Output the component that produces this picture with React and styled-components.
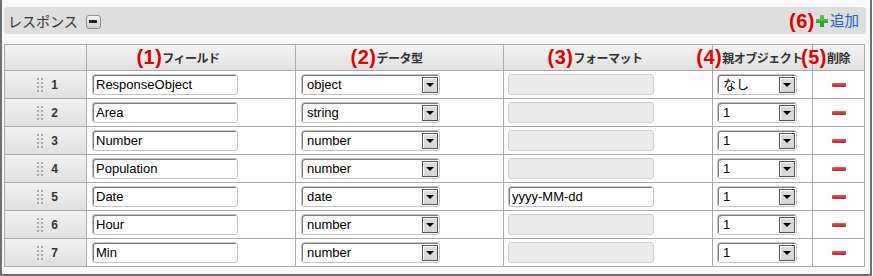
import React from 'react'
import styled, { createGlobalStyle } from 'styled-components'

const GlobalStyle = createGlobalStyle`
  body {
    margin: 0;
    background: #fff;
    font-family: "Liberation Sans", "Noto Sans CJK JP", sans-serif;
  }
`;

const Panel = styled.div`
  box-sizing: border-box;
  width: 872px;
  height: 276px;
  padding: 7px 4px 7px 2px;
  border: 2px solid #6f6f6f;
  border-top: none;
  background: #f8f8fb;
`;

const HeaderBar = styled.div`
  height: 27px;
  display: flex;
  align-items: center;
  padding: 0 7px 0 4px;
  background: #dedede;
  border-radius: 4px;
  margin-bottom: 10px;
`;

const Title = styled.span`
  font-family: "Noto Sans CJK JP", sans-serif;
  font-size: 14px;
  color: #333;
  line-height: 1;
`;

const CollapseButton = styled.button`
  box-sizing: border-box;
  width: 15px;
  height: 14px;
  margin: 2px 0 0 8px;
  padding: 0;
  border: 1px solid #8a8a8a;
  border-radius: 3px;
  background: linear-gradient(#f6f6f6, #cfcfcf);
  display: flex;
  align-items: center;
  justify-content: center;
  &::after {
    content: "";
    width: 8px;
    height: 3px;
    background: #222;
  }
`;

const AddLink = styled.a`
  position: relative;
  margin-left: auto;
  display: flex;
  align-items: center;
  gap: 1px;
  color: #1f5fc4;
  font-family: "Noto Sans CJK JP", sans-serif;
  font-size: 14.5px;
  text-decoration: none;
  line-height: 1;
`;

const Annotation = styled.span`
  position: absolute;
  right: 100%;
  top: 50%;
  transform: translateY(-50%);
  color: #e00000;
  font-family: "Liberation Sans", sans-serif;
  font-weight: bold;
  font-size: 20px;
  letter-spacing: 0.5px;
  white-space: nowrap;
  line-height: 1;
`;

const Grid = styled.table`
  width: 861px;
  table-layout: fixed;
  border-collapse: separate;
  border-spacing: 0;
  border-top: 1px solid #aaa;
  border-left: 1px solid #aaa;
  background: #fff;
`;

const HeadCell = styled.th`
  box-sizing: border-box;
  height: 26px;
  padding: 0;
  border-right: 1px solid #aaa;
  border-bottom: 1px solid #aaa;
  background: linear-gradient(#f4f4f4, #e1e1e1);
  text-align: center;
  vertical-align: middle;
`;

const HeadLabel = styled.span`
  position: relative;
  font-family: "Noto Sans CJK JP", sans-serif;
  font-size: 12px;
  font-weight: bold;
  color: #333;
  letter-spacing: -0.5px;
`;

const Cell = styled.td`
  box-sizing: border-box;
  height: 28px;
  padding: 0 0 0 ${(p) => p.$pad ?? 5}px;
  border-right: 1px solid #aaa;
  border-bottom: 1px solid #aaa;
  vertical-align: middle;
  text-align: ${(p) => (p.$center ? 'center' : 'left')};
`;

const NumCell = styled(Cell)`
  background: linear-gradient(#f2f2f2, #e0e0e0);
  padding: 0;
`;

const NumWrap = styled.div`
  display: flex;
  align-items: center;
  justify-content: center;
  gap: 8px;
  padding-left: 4px;
  font-size: 12px;
  font-weight: bold;
  color: #333;
`;

const TextField = styled.input`
  box-sizing: border-box;
  display: block;
  width: 146px;
  height: 21px;
  padding: 0 3px;
  border: 1px solid #c4c4c4;
  border-radius: 3px;
  box-shadow: inset 1px 1px 0 #7c7c7c;
  background: ${(p) => (p.disabled ? '#ebebeb' : '#fff')};
  font-family: "Liberation Sans", sans-serif;
  font-size: 13px;
  color: #000;
  outline: none;
  &:disabled {
    border-color: #cfcfcf;
    box-shadow: none;
  }
`;

const SelectBox = styled.div`
  box-sizing: border-box;
  width: ${(p) => p.$width}px;
  height: 21px;
  display: flex;
  align-items: center;
  border: 1px solid #c4c4c4;
  border-radius: 3px;
  box-shadow: inset 1px 1px 0 #7c7c7c;
  background: #fff;
  padding-right: 1px;
`;

const SelectInput = styled.select`
  flex: 1;
  min-width: 0;
  height: 100%;
  appearance: none;
  border: none;
  background: transparent;
  padding: 0 0 0 5px;
  font-family: "Liberation Sans", "Noto Sans CJK JP", sans-serif;
  font-size: 13px;
  color: #000;
  outline: none;
`;

const ArrowBox = styled.span`
  box-sizing: border-box;
  width: 16px;
  height: 16px;
  border: 1px solid #555;
  box-shadow: inset 1px 1px 0 #fff;
  background: #d9d9d9;
  display: flex;
  align-items: center;
  justify-content: center;
  &::after {
    content: "";
    border-left: 4px solid transparent;
    border-right: 4px solid transparent;
    border-top: 4px solid #000;
    margin-top: 1px;
  }
`;

const RemoveBar = styled.span`
  display: inline-block;
  width: 14px;
  height: 4px;
  border-radius: 1px;
  background: linear-gradient(#e05a5a, #b52525);
  vertical-align: middle;
`;

const DragHandle = () => (
  <svg width="6" height="14" viewBox="0 0 6 14">
    {[0, 4, 8, 12].map((y) => (
      <g key={y} fill="#a8a8a8">
        <rect x="0" y={y} width="2" height="2" />
        <rect x="4" y={y} width="2" height="2" />
      </g>
    ))}
  </svg>
);

const PlusIcon = () => (
  <svg width="14" height="14" viewBox="0 0 14 14">
    <defs>
      <linearGradient id="pg" x1="0" y1="0" x2="0" y2="1">
        <stop offset="0" stopColor="#5fc94f" />
        <stop offset="1" stopColor="#2a9a2a" />
      </linearGradient>
    </defs>
    <rect x="5" y="1" width="4" height="12" fill="url(#pg)" />
    <rect x="1" y="5" width="12" height="4" fill="url(#pg)" />
  </svg>
);

const Select = ({ value, options, width }) => (
  <SelectBox $width={width}>
    <SelectInput defaultValue={value}>
      {options.map((o) => (
        <option key={o}>{o}</option>
      ))}
    </SelectInput>
    <ArrowBox />
  </SelectBox>
);

const types = ['object', 'string', 'number', 'date', 'boolean'];

const rows = [
  { name: 'ResponseObject', type: 'object', format: '', parent: 'なし' },
  { name: 'Area', type: 'string', format: '', parent: '1' },
  { name: 'Number', type: 'number', format: '', parent: '1' },
  { name: 'Population', type: 'number', format: '', parent: '1' },
  { name: 'Date', type: 'date', format: 'yyyy-MM-dd', parent: '1' },
  { name: 'Hour', type: 'number', format: '', parent: '1' },
  { name: 'Min', type: 'number', format: '', parent: '1' },
];

const columns = [
  { label: '', width: 82 },
  { label: 'フィールド', note: '(1)', width: 209 },
  { label: 'データ型', note: '(2)', width: 208 },
  { label: 'フォーマット', note: '(3)', width: 209 },
  { label: '親オブジェクト', note: '(4)', width: 100 },
  { label: '削除', note: '(5)', width: 52 },
];

const App = () => {
  return (
    <Panel>
      <GlobalStyle />
      <HeaderBar>
        <Title>レスポンス</Title>
        <CollapseButton />
        <AddLink href="#">
          <Annotation>(6)</Annotation>
          <PlusIcon />
          追加
        </AddLink>
      </HeaderBar>
      <Grid>
        <colgroup>
          {columns.map((c, i) => (
            <col key={i} style={{ width: c.width }} />
          ))}
        </colgroup>
        <thead>
          <tr>
            {columns.map((c, i) => (
              <HeadCell key={i}>
                {c.label && (
                  <HeadLabel>
                    <Annotation>{c.note}</Annotation>
                    {c.label}
                  </HeadLabel>
                )}
              </HeadCell>
            ))}
          </tr>
        </thead>
        <tbody>
          {rows.map((r, i) => (
            <tr key={r.name}>
              <NumCell>
                <NumWrap>
                  <DragHandle />
                  {i + 1}
                </NumWrap>
              </NumCell>
              <Cell>
                <TextField defaultValue={r.name} />
              </Cell>
              <Cell>
                <Select value={r.type} options={types} width={139} />
              </Cell>
              <Cell $pad={4}>
                <TextField defaultValue={r.format} disabled={!r.format} />
              </Cell>
              <Cell $pad={4}>
                <Select value={r.parent} options={['なし', '1']} width={80} />
              </Cell>
              <Cell $center $pad={0}>
                <RemoveBar />
              </Cell>
            </tr>
          ))}
        </tbody>
      </Grid>
    </Panel>
  )
}

export default App
